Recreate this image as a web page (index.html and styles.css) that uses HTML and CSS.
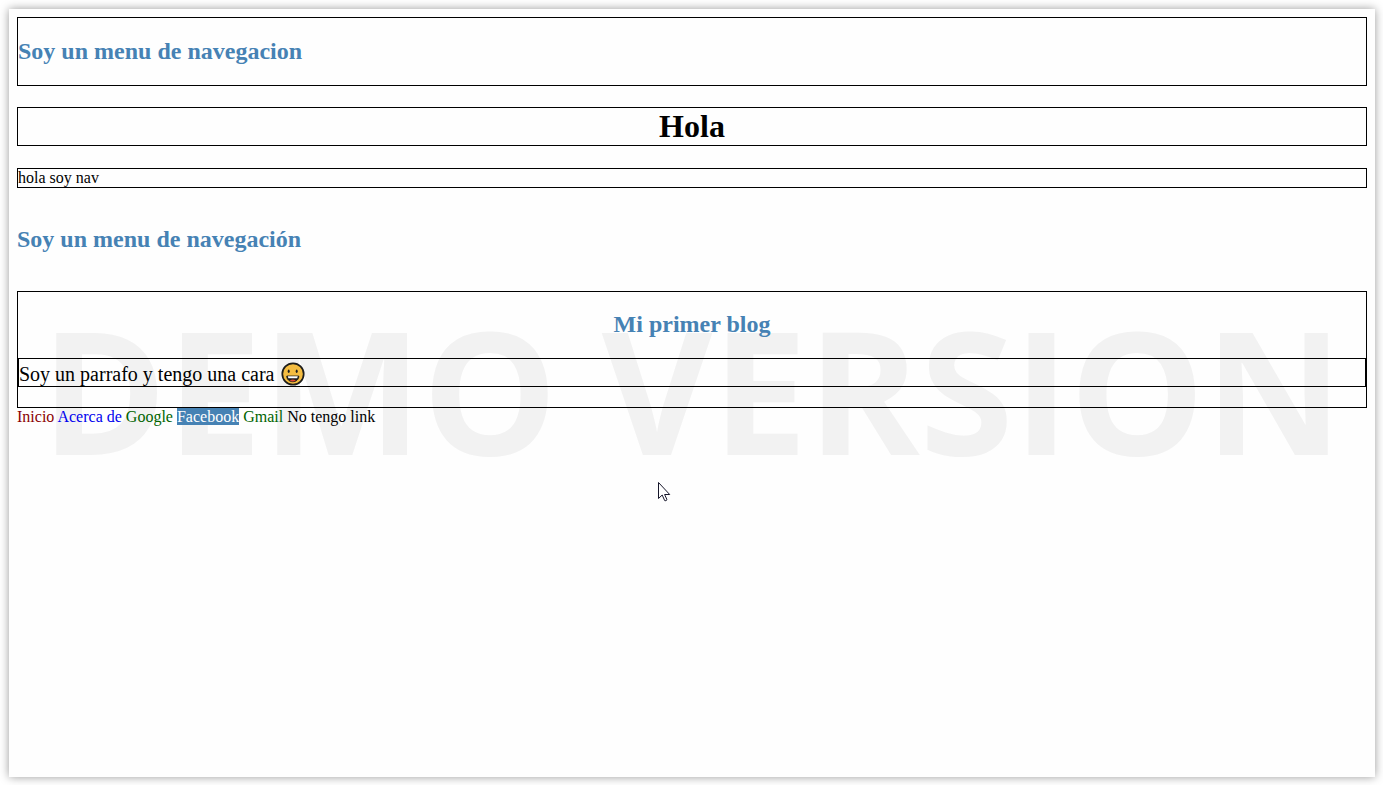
FILE: index.html
```html
<!DOCTYPE html>
<html lang="es">
<head>
<meta charset="utf-8">
<title>Mi primer blog</title>
<link rel="stylesheet" href="styles.css">
</head>
<body>
<div class="sheet">
  <div class="watermark" aria-hidden="true">DEMO VERSION</div>
  <header class="box"><h2 class="subtitle">Soy un menu de navegacion</h2></header>
  <h1 class="title box">Hola</h1>
  <nav class="box">hola soy nav</nav>
  <h2 class="subtitle spaced">Soy un menu de navegación</h2>
  <section class="box">
    <h2 class="subtitle centered">Mi primer blog</h2>
    <p class="paragraph box">Soy un parrafo y tengo una cara
      <svg class="face" viewBox="0 0 24 24" role="img" aria-label="cara sonriente">
        <circle cx="12" cy="12" r="10.7" fill="#f5bd41" stroke="#1d1d1b" stroke-width="1.7"/>
        <ellipse cx="7.7" cy="9.3" rx="1" ry="1.700" fill="#1d1d1b"/>
        <ellipse cx="15.7" cy="9.3" rx="1" ry="1.700" fill="#1d1d1b"/>
        <path d="M5.800 14.100h12c0 3.200-2.500 5.600-6 5.600s-6-2.400-6-5.600z" fill="#1d1d1b" stroke="#1d1d1b"/>
        <path d="M6.800 14.300h10l-.6 2h-8.800z" fill="#fff"/>
        <path d="M8.700 18.500q3.200-2 6.200 0-3 2-6.200 0z" fill="#e3452f"/>
      </svg>
    </p>
  </section>
  <div class="links">
    <a class="visited" href="#inicio">Inicio</a>
    <a class="plain" href="#acerca">Acerca de</a>
    <a class="external" href="#google">Google</a>
    <a class="active" href="#facebook">Facebook</a>
    <a class="external" href="#gmail">Gmail</a>
    <a>No tengo link</a>
  </div>
  <svg class="pointer" viewBox="0 0 13 20" aria-hidden="true">
    <path d="M.5.500v16l3.700-3.500 2.500 5.600q1.200.600 2.300-.900l-2.400-5.200h5.100z" fill="#fff" stroke="#16162a"/>
  </svg>
</div>
</body>
</html>
```
FILE: styles.css
```css
* { box-sizing: border-box; }

body {
  margin: 0;
  padding: 9px 8px 8px 9px;
  min-height: 100vh;
  display: flex;
  background: #fff;
  color: #000;
  font: 16px/18px "Liberation Serif", "Times New Roman", serif;
}

.sheet {
  position: relative;
  z-index: 0;
  flex: 1;
  padding: 8px;
  background: #fefefe;
  box-shadow: 0 0 9px rgba(0, 0, 0, 0.4);
}

.box { border: 1px solid #000; }

.title {
  margin: 21px 0 22px;
  font-size: 32px;
  line-height: 37px;
  text-align: center;
}

.subtitle {
  margin: 20px 0;
  color: #4682b4;
  font-size: 24px;
  line-height: 27px;
}

.spaced { margin: 38px 0; }

.centered {
  margin: 19px 0 20px;
  text-align: center;
}

.paragraph {
  margin: 0 0 20px;
  padding-top: 4px;
  font-size: 20px;
  line-height: 23px;
}

.face {
  width: 24px;
  height: 24px;
  margin: -4px 0 -4px 2px;
  vertical-align: -1px;
}

.links a { text-decoration: none; }
.links .visited { color: #8b0000; }
.links .plain { color: #0000ee; }
.links .external { color: #006400; }
.links .active {
  background: #4682b4;
  color: #fff;
}

.watermark {
  position: absolute;
  z-index: -1;
  top: 380px;
  left: 50%;
  transform: translate(-50%, -50%);
  color: #f2f2f2;
  font: bold 170px/224px "Open Sans", "Noto Sans", sans-serif;
  white-space: nowrap;
}

.pointer {
  position: absolute;
  top: 473px;
  left: 649px;
  width: 13px;
  height: 20px;
}
```
